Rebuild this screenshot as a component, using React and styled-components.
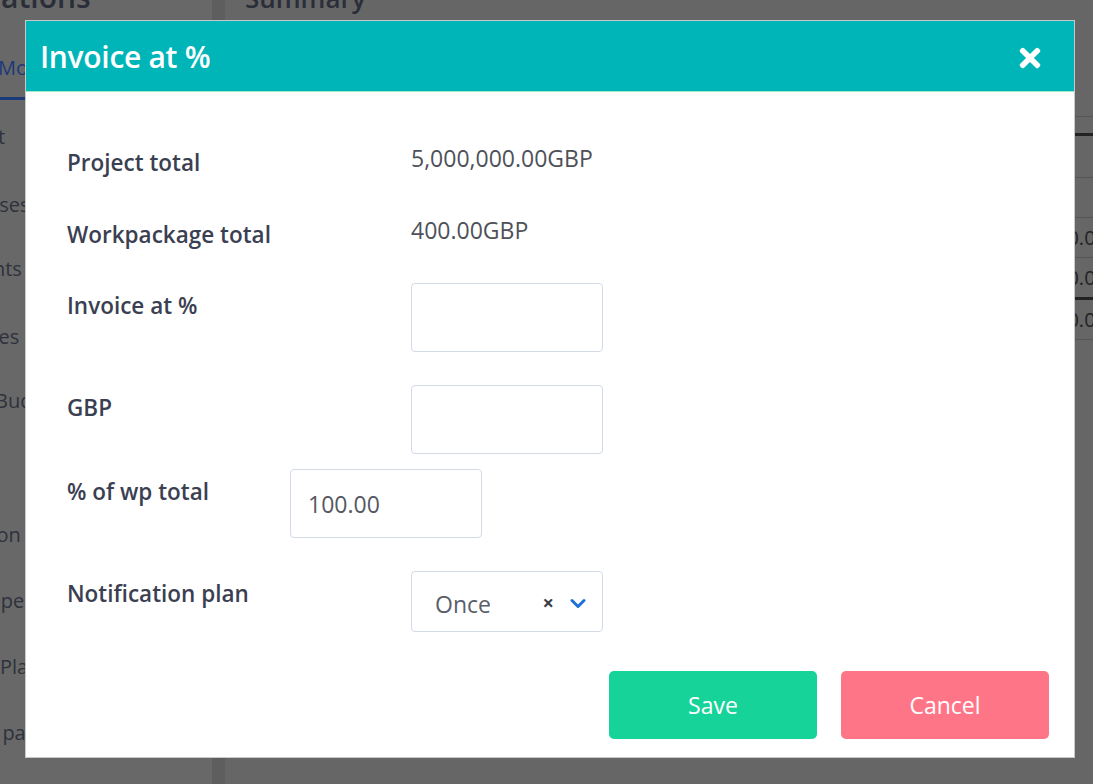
import React from 'react'
import styled, { createGlobalStyle } from 'styled-components'
import { FaTimes } from 'react-icons/fa'

const GlobalStyle = createGlobalStyle`
    html, body {
        margin: 0;
        padding: 0;
        overflow: hidden;
    }
    body {
        font-family: "Open Sans", "Noto Sans", sans-serif;
        background-color: #666666;
    }
`

// Page behind the dialog (already dimmed by the backdrop)
const Page = styled.div`
    position: relative;
    display: flex;
    width: 1093px;
    height: 784px;
    overflow: hidden;
`

const Sidebar = styled.div`
    width: 212px;
    flex-shrink: 0;
    background-color: #686868;
    overflow: hidden;
`

const SideInner = styled.div`
    margin-left: -70px;
    margin-top: -24px;
    display: flex;
    flex-direction: column;
`

const SideTitle = styled.div`
    font-size: 30px;
    font-weight: 600;
    color: #2a2e38;
    margin-left: -16px;
    height: 40px;
`

const SideTab = styled.div`
    margin-top: 38px;
    margin-left: 68px;
    font-size: 20px;
    color: #1a3a7a;
    padding-bottom: 16px;
    border-bottom: 3px solid #1a3a7a;
    width: 120px;
`

const SideItem = styled.div`
    font-size: 20px;
    color: #2e323c;
    height: ${p => p.$h || 66}px;
    line-height: 30px;
    padding-left: ${p => p.$indent || 0}px;
    white-space: nowrap;
`

const Gutter = styled.div`
    width: 13px;
    flex-shrink: 0;
    background-color: #5e5e5e;
`

const Main = styled.div`
    flex: 1;
    display: flex;
    flex-direction: column;
    overflow: hidden;
`

const MainTitle = styled.div`
    margin-top: -20px;
    margin-left: 20px;
    font-size: 26px;
    font-weight: 600;
    color: #2a2e38;
    height: 120px;
`

const Table = styled.div`
    align-self: flex-end;
    margin-right: -30px;
    width: 300px;
    display: flex;
    flex-direction: column;
`

const TRow = styled.div`
    height: ${p => p.$h}px;
    border-bottom: ${p => p.$thick ? 3 : 1}px solid ${p => p.$thick ? '#222' : '#555'};
    display: flex;
    align-items: center;
    justify-content: flex-end;
    font-size: 20px;
    color: #222;
    padding-right: 16px;
`

const Backdrop = styled.div`
    position: absolute;
    inset: 0;
`

// Dialog
const Modal = styled.div`
    position: absolute;
    left: 25px;
    top: 20px;
    width: 1048px;
    height: 736px;
    background: #ffffff;
    border: 1px solid #c9c9c9;
    display: flex;
    flex-direction: column;
`

const Header = styled.div`
    height: 70px;
    background-color: #00b5b8;
    border-bottom: 1px solid #9fe8c8;
    display: flex;
    align-items: center;
    justify-content: space-between;
    padding: 0 29px 0 14px;
`

const Title = styled.h4`
    margin: 0;
    color: #ffffff;
    font-size: 30px;
    font-weight: 600;
    letter-spacing: -0.3px;
`

const Close = styled.button`
    border: none;
    background: none;
    padding: 0;
    margin-top: 4px;
    color: #ffffff;
    display: flex;
    font-size: 30px;
`

const Body = styled.div`
    flex: 1;
    padding: 52px 25px 0 41px;
    display: flex;
    flex-direction: column;
`

const Row = styled.div`
    display: grid;
    grid-template-columns: ${p => p.$labelWidth || 344}px auto;
    align-items: start;
    margin-top: ${p => p.$mt || 0}px;
`

const Label = styled.div`
    font-size: 22.5px;
    font-weight: 600;
    color: #3b3f52;
    line-height: 28px;
    padding-top: ${p => p.$pt || 0}px;
`

const Value = styled.div`
    font-size: 23px;
    color: #4e5159;
    line-height: 28px;
`

const Input = styled.input`
    box-sizing: border-box;
    width: 192px;
    height: 69px;
    border: 1px solid #d3dae6;
    border-radius: 4px;
    padding: 0 17px;
    font-family: inherit;
    font-size: 23px;
    color: #555861;
    outline: none;
`

const Select = styled.div`
    box-sizing: border-box;
    width: 192px;
    height: 61px;
    border: 1px solid #d3dae6;
    border-radius: 4px;
    padding: 4px 16px 0 23px;
    display: flex;
    align-items: center;
    font-size: 23px;
    color: #5a5e6a;
`

const SelectValue = styled.span`
    flex: 1;
`

const Clear = styled.span`
    font-size: 20px;
    font-weight: 700;
    color: #3a3d46;
    margin-right: 16px;
    margin-top: -2px;
`

const Footer = styled.div`
    display: flex;
    justify-content: flex-end;
    gap: 24px;
    margin-top: 39px;
`

const Button = styled.button`
    width: 208px;
    height: 68px;
    border: none;
    border-radius: 5px;
    background-color: ${p => p.$bg};
    color: #ffffff;
    font-family: inherit;
    font-size: 23px;
`

const Chevron = () => (
    <svg width="16" height="11" viewBox="0 0 16 11">
        <path d="M2 2.5 L8 8.5 L14 2.5" fill="none" stroke="#1f6fd6" strokeWidth="3" strokeLinecap="round" strokeLinejoin="round" />
    </svg>
)

const App = () => (
    <>
        <GlobalStyle />
        <Page>
            <Sidebar>
                <SideInner>
                    <SideTitle>Calculations</SideTitle>
                    <SideTab>Modules</SideTab>
                    <SideItem $h={68} $indent={10} style={{ marginTop: 22 }}>Project</SideItem>
                    <SideItem $h={64} $indent={12}>Expenses</SideItem>
                    <SideItem $h={68} $indent={-4}>Payments</SideItem>
                    <SideItem $h={64} $indent={14}>Invoices</SideItem>
                    <SideItem $h={134} $indent={65}>Budget</SideItem>
                    <SideItem $h={66} $indent={32}>Action</SideItem>
                    <SideItem $h={66} $indent={45}>Dependencies</SideItem>
                    <SideItem $h={66} $indent={70}>Plan</SideItem>
                    <SideItem $h={66} $indent={18}>Work packages</SideItem>
                </SideInner>
            </Sidebar>
            <Gutter />
            <Main>
                <MainTitle>Summary</MainTitle>
                <Table>
                    <TRow $h={16} />
                    <TRow $h={16} $thick />
                    <TRow $h={41} />
                    <TRow $h={39} />
                    <TRow $h={39}>0.00</TRow>
                    <TRow $h={39} $thick>0.00</TRow>
                    <TRow $h={39}>0.00</TRow>
                </Table>
            </Main>
            <Backdrop>
                <Modal>
                    <Header>
                        <Title>Invoice at %</Title>
                        <Close aria-label="close"><FaTimes /></Close>
                    </Header>
                    <Body>
                        <Row>
                            <Label $pt={5}>Project total</Label>
                            <Value>5,000,000.00GBP</Value>
                        </Row>
                        <Row $mt={39}>
                            <Label $pt={5}>Workpackage total</Label>
                            <Value>400.00GBP</Value>
                        </Row>
                        <Row $mt={34}>
                            <Label $pt={9}>Invoice at %</Label>
                            <Input />
                        </Row>
                        <Row $mt={33}>
                            <Label $pt={9}>GBP</Label>
                            <Input />
                        </Row>
                        <Row $mt={15} $labelWidth={223}>
                            <Label $pt={9}>% of wp total</Label>
                            <Input defaultValue="100.00" />
                        </Row>
                        <Row $mt={33}>
                            <Label $pt={9}>Notification plan</Label>
                            <Select>
                                <SelectValue>Once</SelectValue>
                                <Clear>×</Clear>
                                <Chevron />
                            </Select>
                        </Row>
                        <Footer>
                            <Button $bg="#16d39a">Save</Button>
                            <Button $bg="#ff7588">Cancel</Button>
                        </Footer>
                    </Body>
                </Modal>
            </Backdrop>
        </Page>
    </>
)

export default App
